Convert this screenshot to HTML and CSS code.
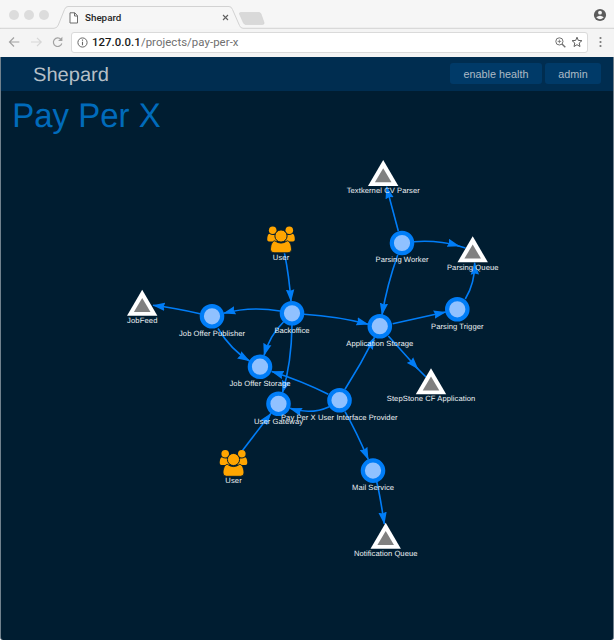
FILE: index.html
```
<!DOCTYPE html>
<html lang="en">
<head>
<meta charset="utf-8">
<title>Shepard</title>
<link rel="stylesheet" href="styles.css">
</head>
<body>
<div class="window">
  <div class="tabstrip">
    <svg class="tab-shape" width="614" height="29" viewBox="0 0 614 29">
      <path d="M0 28.3H54Q57 28.3 58.3 25L64.500 9.500Q65.700 6.500 68 6.500H229Q231.500 6.500 232.500 9.500L239.500 25.500Q240.500 28.300 243 28.300H614V30H0Z" fill="#f6f6f6" stroke="#d2d2d2"/>
      <path d="M241 12.500H259Q260.500 12.500 261 14L264 22.500Q264.500 24.500 262.500 24.500H246Q244.500 24.500 243.500 23L239.500 14Q239 12.500 241 12.500Z" fill="#d9d9d9" stroke="#d0d0d0" stroke-width=".6"/>
    </svg>
    <div class="dots"><i></i><i></i><i></i></div>
    <svg class="file" width="10" height="12" viewBox="0 0 10 12"><path d="M1 .8H5.800L8.500 3.700V11H1ZM5.500 .8V4H8.500" fill="#fff" stroke="#6c6c6c"/></svg>
    <span class="tab-title">Shepard</span>
    <svg class="close" width="7" height="7" viewBox="0 0 7 7"><path d="M1 1L6 6M6 1L1 6" stroke="#606060" stroke-width="1.100"/></svg>
    <svg class="profile" width="14" height="14" viewBox="0 0 14 14"><circle cx="7" cy="7" r="6.100" fill="#5c5c5c"/><circle cx="7" cy="4.700" r="1.900" fill="#f6f6f6"/><path d="M3.200 9.300Q7 6.300 10.800 9.300Q7 13.400 3.200 9.300Z" fill="#f6f6f6"/></svg>
  </div>
  <div class="toolbar">
    <svg class="nav" width="60" height="14" viewBox="0 0 60 14" fill="none" stroke-width="1.200">
      <path d="M12.300 7H2.600M7 2.500L2.500 7L7 11.500" stroke="#a2a2a2"/>
      <path d="M24 7H34M30 2.800L34.200 7L30 11.200" stroke="#d6d6d6"/>
      <path d="M53.900 4.300A4.300 4.300 0 1 0 54.800 8.500" stroke="#a2a2a2"/><path d="M55.400 1.700V6H51.100Z" fill="#a2a2a2"/>
    </svg>
    <div class="address">
      <svg width="11" height="11" viewBox="0 0 11 11"><circle cx="5.500" cy="5.500" r="4.600" fill="none" stroke="#666"/><path d="M5.500 4.700V8.200M5.500 2.600V3.700" stroke="#666" stroke-width="1.100"/></svg>
      <span class="url"><b>127.0.0.1</b>/projects/pay-per-x</span>
      <svg class="zoomicon" width="11" height="11" viewBox="0 0 11 11" fill="none" stroke="#707070"><circle cx="4.400" cy="4.400" r="3.600"/><path d="M7 7L10.300 10.300" stroke-width="1.400"/><path d="M2.600 4.400H6.200M4.400 2.600V6.200" stroke-width=".8"/></svg>
      <svg width="12" height="12" viewBox="0 0 12 12" fill="none" stroke="#606060"><path d="M6 1.200L7.300 4.400L10.900 4.700L8.200 7L9 10.500L6 8.700L3 10.500L3.800 7L1.100 4.700L4.700 4.400Z"/></svg>
    </div>
    <svg class="more" width="3" height="12" viewBox="0 0 3 12" fill="#777"><circle cx="1.500" cy="2" r="1.100"/><circle cx="1.500" cy="6" r="1.100"/><circle cx="1.500" cy="10" r="1.100"/></svg>
  </div>
  <div class="page">
    <header>
      <div class="brand"><svg width="90" height="33"><text x="0" y="23" textLength="76" lengthAdjust="spacingAndGlyphs">Shepard</text></svg></div>
      <button class="health">enable health</button>
      <button class="admin">admin</button>
    </header>
    <svg class="graph" width="612" height="549" viewBox="1 91 612 549">
      <defs>
        <marker id="arrow" markerUnits="userSpaceOnUse" markerWidth="13" markerHeight="9" refX="12" refY="4.500" orient="auto"><path d="M0 .3L12.500 4.500L0 8.700L1.300 4.500Z" fill="#007df7"/></marker>
        <g id="service"><circle r="10.200" fill="#90c1ff" stroke="#007df7" stroke-width="4.200"/></g>
        <g id="external"><path d="M0-13L15.200 13H-15.200Z" fill="#fff"/><path d="M0-4.700L8.300 9.300H-8.300Z" fill="#808080"/></g>
        <g id="people" fill="#ffa500">
          <circle cx="-8.300" cy="-9.300" r="3.800"/><circle cx="8.300" cy="-9.300" r="3.800"/>
          <path d="M-11.800-5.800Q-8.500-3.500-5.500-5L-4 2H-12Q-13.800 2-13.800 0Q-13.800-4.500-11.800-5.800ZM11.800-5.800Q8.500-3.500 5.500-5L4 2H12Q13.800 2 13.800 0Q13.800-4.500 11.800-5.800Z"/>
          <path d="M-6.300 1.300Q0 5.900 6.300 1.300C9.500 2 10.500 7 10.500 10Q10.500 13.300 7 13.300H-7Q-10.500 13.300-10.500 10C-10.500 7-9.500 2-6.300 1.300Z" stroke="#001d31" stroke-width=".9"/>
          <circle cy="-3.500" r="6.100" stroke="#001d31" stroke-width="1"/>
        </g>
      </defs>
      <text class="title" x="12.200" y="126.800" textLength="148.500" lengthAdjust="spacingAndGlyphs">Pay Per X</text>
      <g class="edges">
        <path d="M284.300 252.300Q289 275 291 301.500"/>
        <path d="M280 311Q251 306 223.500 313.300"/>
        <path d="M200 313.800Q175 308 153 305.300"/>
        <path d="M304 314.300Q338 316.500 368.300 324.300"/>
        <path d="M218 328.500Q231 350 249.500 361"/>
        <path d="M283.500 322Q270 335 264 355.500"/>
        <path d="M292 325Q291.500 363 282.500 392.500"/>
        <path d="M329.300 406.700Q311 415 290 408.300"/>
        <path d="M328.300 394.300Q302 381 271.700 371.500"/>
        <path d="M345 389.300Q361 364 374.500 337.300"/>
        <path d="M345 411.700Q356 431 368.300 459.500"/>
        <path d="M242.300 450.700L271 413.300"/>
        <path d="M376.700 481.700Q380 495 384.300 524"/>
        <path d="M388.300 336Q401 350 418 369"/>
        <path d="M392.700 323.700L445.700 312"/>
        <path d="M465.300 299Q475 283 474.700 262.700"/>
        <path d="M414 241.700Q438 240 459.300 246"/>
        <path d="M397.700 255Q387 285 382 315"/>
        <path d="M398.300 231L386.500 186.700"/>
        <path class="tail" d="M416 367L426 377M457 245.500L465.500 248"/>
      </g>
      <use href="#people" x="281" y="239.500"/><use href="#people" x="233.500" y="463"/>
      <use href="#service" x="292" y="313.300"/><use href="#service" x="212" y="316.300"/><use href="#service" x="260" y="366.700"/>
      <use href="#service" x="278.500" y="403.800"/><use href="#service" x="339.500" y="400.200"/><use href="#service" x="379.800" y="326.200"/>
      <use href="#service" x="402" y="243"/><use href="#service" x="457.300" y="309.300"/><use href="#service" x="373" y="470.600"/>
      <use href="#external" x="383.200" y="173"/><use href="#external" x="472.700" y="249.300"/><use href="#external" x="142.200" y="302.700"/>
      <use href="#external" x="431" y="381.200"/><use href="#external" x="385.700" y="535.800"/>
      <g class="labels">
        <text x="383.200" y="193.300" textLength="73">Textkernel CV Parser</text>
        <text x="281" y="260.200" textLength="16.500">User</text>
        <text x="402" y="262.300" textLength="53">Parsing Worker</text>
        <text x="472.700" y="269.800" textLength="51.500">Parsing Queue</text>
        <text x="142.200" y="323" textLength="30.500">JobFeed</text>
        <text x="212" y="335.600" textLength="66">Job Offer Publisher</text>
        <text x="292" y="332.800" textLength="35">Backoffice</text>
        <text x="379.800" y="345.600" textLength="67">Application Storage</text>
        <text x="457.300" y="328.800" textLength="52.500">Parsing Trigger</text>
        <text x="260" y="386.300" textLength="61">Job Offer Storage</text>
        <text x="431" y="401.300" textLength="88.500">StepStone CF Application</text>
        <text x="278.500" y="423.500" textLength="49">User Gateway</text>
        <text x="339.200" y="419.600" textLength="116.500">Pay Per X User Interface Provider</text>
        <text x="233.500" y="483.300" textLength="16.500">User</text>
        <text x="373" y="489.800" textLength="42">Mail Service</text>
        <text x="385.700" y="556.300" textLength="63.500">Notification Queue</text>
      </g>
    </svg>
  </div>
</div>
</body>
</html>
```
FILE: styles.css
```
* { box-sizing: border-box; }
html, body { margin: 0; height: 100%; background: #fff; overflow: hidden; }
body { font-family: "Liberation Sans", Arial, sans-serif; }
svg { display: block; flex: none; }
svg text { text-rendering: geometricPrecision; }
.window { width: 614px; height: 640px; display: flex; flex-direction: column; }
.tabstrip { height: 29px; position: relative; display: flex; align-items: center; padding: 6px 7px 0 9px; background: #f6f6f6; flex: none; }
.tab-shape { position: absolute; left: 0; top: 0; }
.dots { display: flex; gap: 5px; margin-top: -6px; position: relative; }
.dots i { width: 10px; height: 10px; border-radius: 50%; background: #dcdcdc; }
.file { position: relative; margin-left: 20px; }
.tab-title { position: relative; font: 500 9.8px Roboto, sans-serif; color: #262626; margin-left: 6px; width: 137px; }
.close { position: relative; }
.profile { position: relative; margin-left: auto; margin-top: -5px; }
.toolbar { height: 28px; display: flex; align-items: center; background: #f4f4f4; padding: 0 12px 2px 5px; flex: none; }
.nav { margin-left: 2px; width: 60px; }
.address { width: 517px; height: 21px; margin-left: 4px; border: 1px solid #dadada; border-radius: 3px; background: #fff; display: flex; align-items: center; padding: 0 4px 0 5px; }
.url { font: 11.4px Roboto, sans-serif; letter-spacing: .06px; color: #6f6f6f; margin-left: 4px; white-space: nowrap; }
.url b { font-weight: 500; color: #191919; }
.zoomicon { margin-left: auto; margin-right: 5px; }
.more { margin-left: auto; }
.page { flex: 1; background: #001d31; border: solid #70818d; border-width: 0 1px; border-radius: 0 0 3px 3px; overflow: hidden; }
header { height: 34px; background: #002d50; display: flex; align-items: center; padding: 0 12px 0 32px; }
.brand { margin-right: auto; font-size: 19.5px; }
.brand text { fill: #b5bfc6; }
button { height: 21px; border: 0; border-radius: 3px; padding: 0; background: #003a68; color: #aebbc6; font: 10.8px "Liberation Sans", Arial, sans-serif; margin-bottom: 1px; }
.health { width: 92px; margin-right: 3px; }
.admin { width: 56px; }
.title { font-size: 34px; fill: #006bbb; }
.edges { fill: none; stroke: #007df7; stroke-width: 1.6px; }
.edges path:not(.tail) { marker-end: url(#arrow); }
.labels { font-size: 7.6px; fill: #edf1f4; text-anchor: middle; }
```
